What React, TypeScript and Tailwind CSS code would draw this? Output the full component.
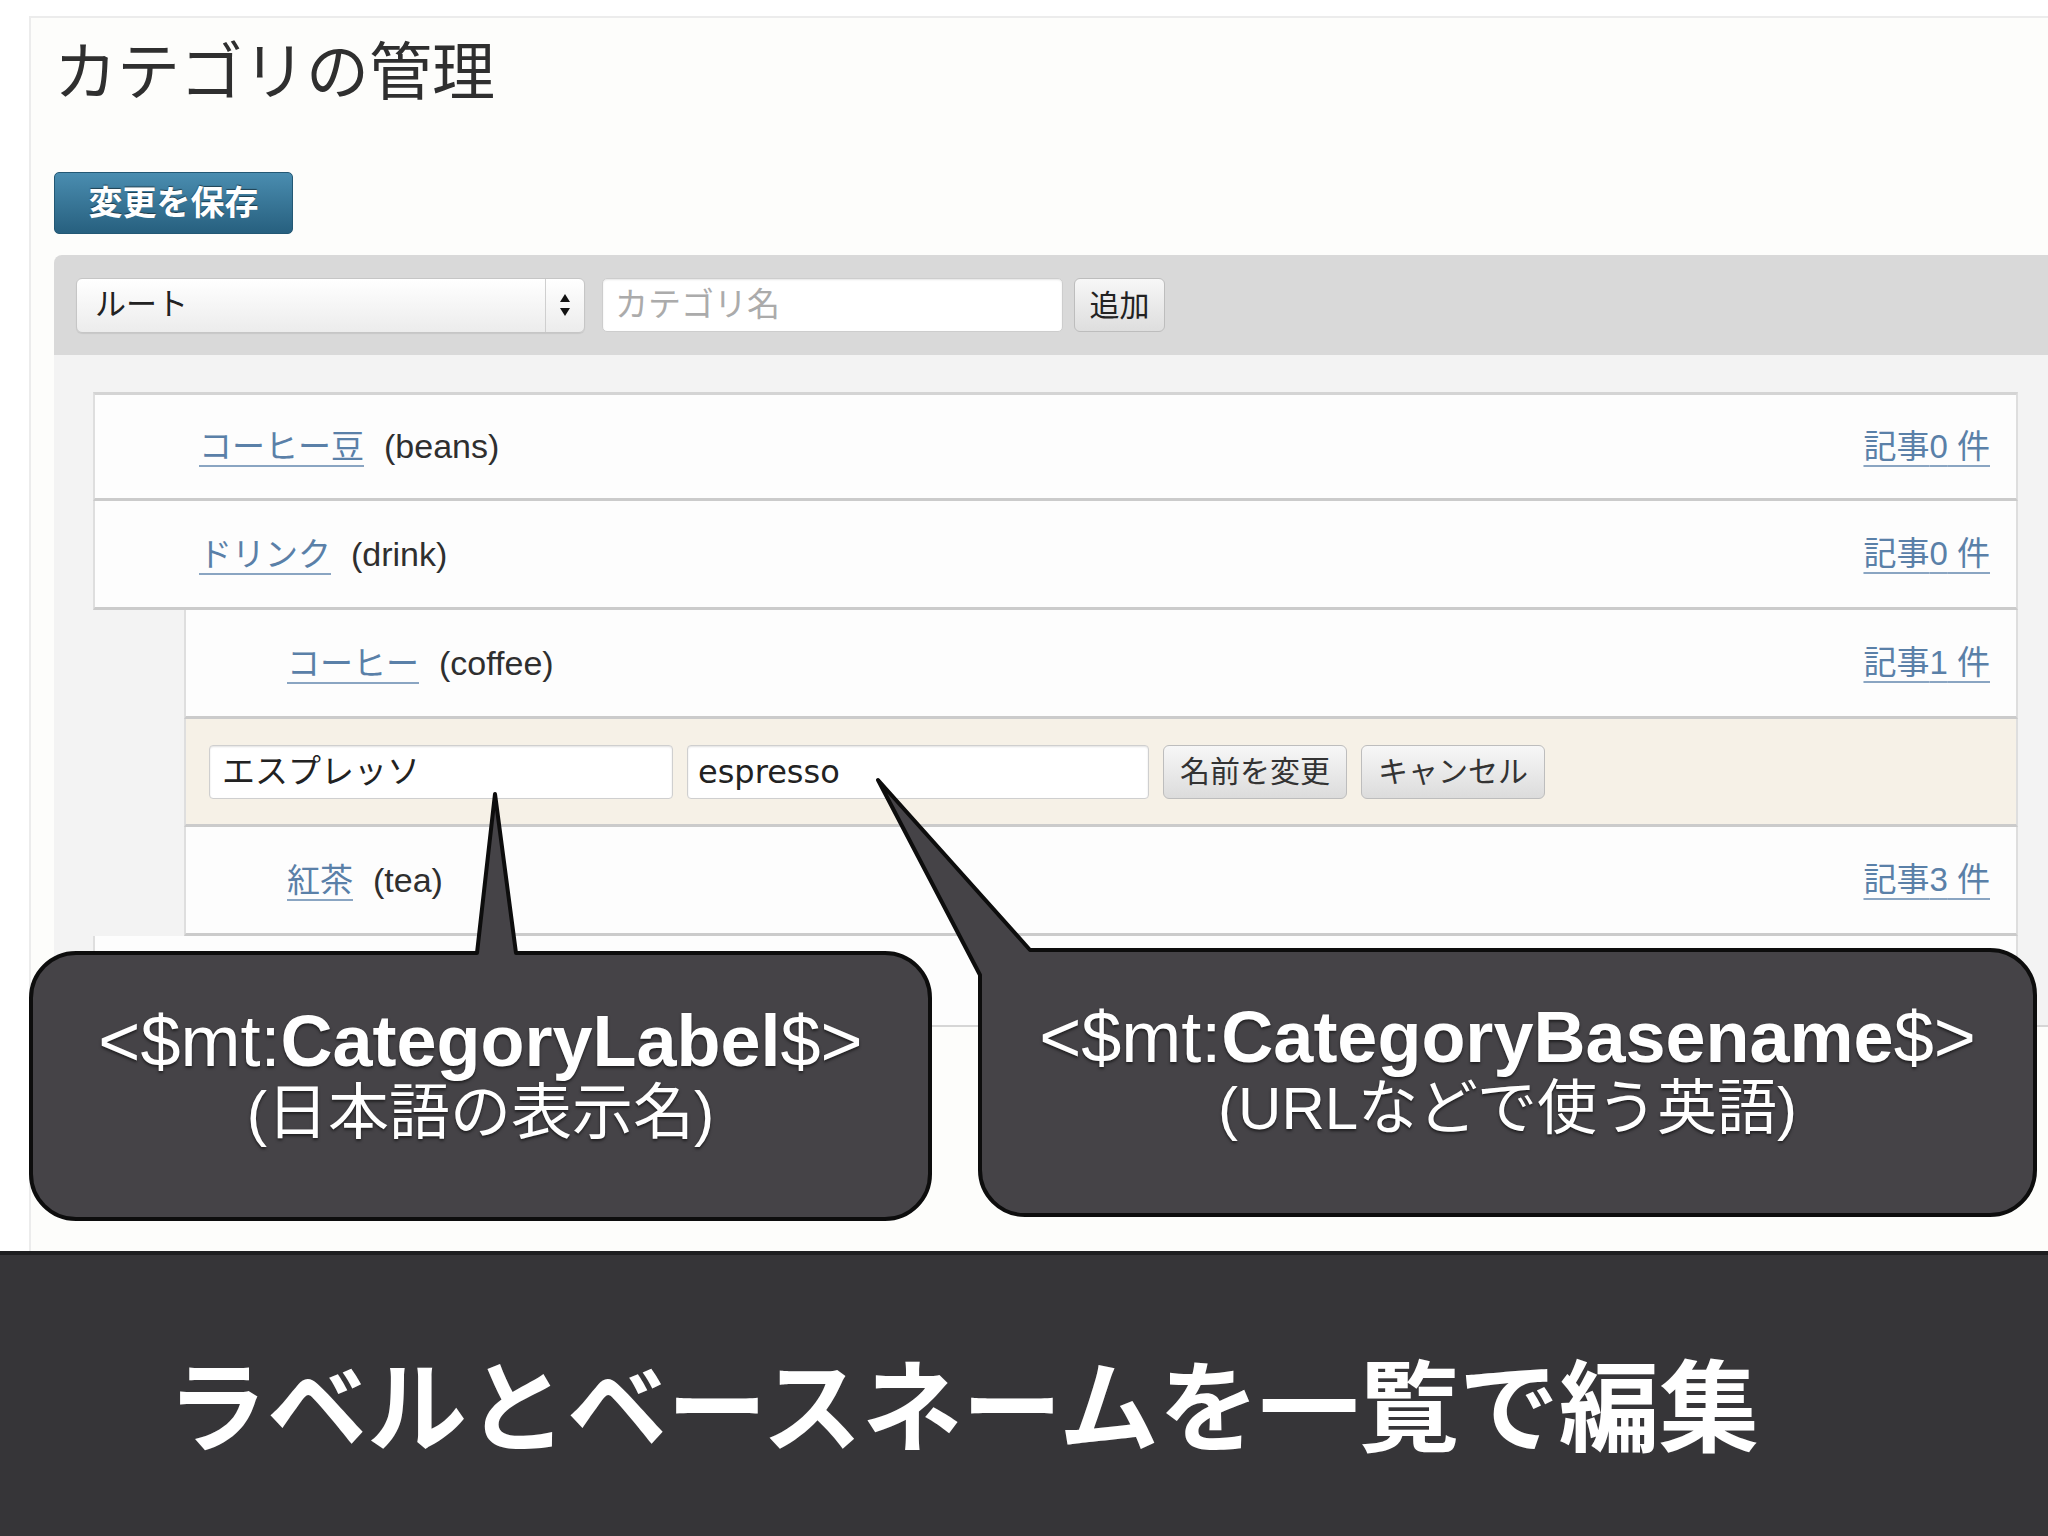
import React from 'react';

type Cat = { label: string; slug: string; count: number };

function CountLink({ count }: { count: number }) {
  return (
    <a className="text-[33px] text-[#5a80a8] underline decoration-2 decoration-[#8aa5c2] underline-offset-[7px]">
      記事{count} 件
    </a>
  );
}

function CatRow({ cat, nested, first }: { cat: Cat; nested?: boolean; first?: boolean }) {
  return (
    <div
      className={
        'flex h-[109px] items-center justify-between border-x-2 border-b-[3px] border-x-[#dedede] border-b-[#cbcbcb] bg-[#fdfdfd] pr-[26px] ' +
        (nested ? 'pl-[101px] ' : 'pl-[104px] ') +
        (first ? 'border-t-[3px] border-t-[#d4d4d4]' : '')
      }
    >
      <div className="flex items-baseline gap-[20px]">
        <a className="text-[33px] text-[#5a80a8] underline decoration-2 decoration-[#8aa5c2] underline-offset-[7px]">
          {cat.label}
        </a>
        <span className="text-[34px] text-[#2f2f2f]">({cat.slug})</span>
      </div>
      <CountLink count={cat.count} />
    </div>
  );
}

function EditRow() {
  return (
    <div className="flex h-[108px] items-center gap-[14px] border-x-2 border-b-[3px] border-x-[#dedede] border-b-[#cbcbcb] bg-[#f6f1e7] pl-[23px]">
      <div className="flex h-[54px] w-[464px] items-center rounded-[4px] border border-[#cfcfcf] bg-white pl-[12px] text-[33px] text-[#222] shadow-[inset_0_1px_2px_rgba(0,0,0,0.12)]">
        エスプレッソ
      </div>
      <div className="flex h-[54px] w-[462px] items-center rounded-[4px] border border-[#cfcfcf] bg-white pl-[10px] font-['DejaVu_Sans',sans-serif] text-[32px] text-[#222] shadow-[inset_0_1px_2px_rgba(0,0,0,0.12)]">
        espresso
      </div>
      <button className="h-[54px] w-[184px] rounded-[6px] border border-[#bdbdbd] bg-gradient-to-b from-[#f7f7f7] to-[#dcdcdc] text-[30px] text-[#333]">
        名前を変更
      </button>
      <button className="h-[54px] w-[184px] rounded-[6px] border border-[#bdbdbd] bg-gradient-to-b from-[#f7f7f7] to-[#dcdcdc] text-[30px] text-[#333]">
        キャンセル
      </button>
    </div>
  );
}

export default function App() {
  return (
    <div className="relative h-[1536px] w-[2048px] overflow-hidden bg-white font-['Liberation_Sans','Noto_Sans_CJK_JP',sans-serif] text-[#333]">
      {/* Panel */}
      <div className="ml-[29px] mt-[16px] h-[1235px] border-l-2 border-t-2 border-[#ececec] bg-[#fdfdfb] pl-[23px]">
        <h1 className="pt-[4px] text-[63px] leading-[100px] font-normal text-[#2f2f2f]">カテゴリの管理</h1>

        <button className="mt-[50px] h-[62px] w-[239px] rounded-[5px] border border-[#235874] bg-gradient-to-b from-[#4a8db0] to-[#27607f] text-[34px] font-bold text-white [text-shadow:0_-1px_1px_rgba(0,0,0,0.5)]">
          変更を保存
        </button>

        {/* Toolbar */}
        <div className="mt-[21px] flex h-[100px] items-center rounded-tl-[8px] bg-[#d9d9d9] pl-[22px]">
          <div className="flex h-[55px] w-[509px] items-stretch rounded-[6px] border border-[#c6c6c6] bg-gradient-to-b from-[#ffffff] to-[#ececec] shadow-[0_1px_1px_rgba(0,0,0,0.08)]">
            <div className="flex flex-1 items-center pl-[18px] text-[31px] text-[#222]">ルート</div>
            <div className="flex w-[39px] items-center justify-center border-l border-[#cfcfcf]">
              <svg width="12" height="26" viewBox="0 0 12 26">
                <path d="M6 2 L11 10 L1 10 Z" fill="#111" />
                <path d="M6 24 L11 16 L1 16 Z" fill="#111" />
              </svg>
            </div>
          </div>
          <div className="ml-[17px] flex h-[54px] w-[461px] items-center rounded-[5px] border border-[#cdcdcd] bg-white pl-[12px] text-[33px] text-[#ababab] shadow-[inset_0_1px_2px_rgba(0,0,0,0.1)]">
            カテゴリ名
          </div>
          <button className="ml-[11px] h-[54px] w-[91px] rounded-[6px] border border-[#bdbdbd] bg-gradient-to-b from-[#f7f7f7] to-[#dedede] text-[30px] text-[#222]">
            追加
          </button>
        </div>

        {/* Category list */}
        <div className="h-[672px] overflow-hidden border-b-2 border-[#d6d6d6] bg-[#f3f3f3] pl-[39px] pr-[30px] pt-[37px]">
          <CatRow first cat={{ label: 'コーヒー豆', slug: 'beans', count: 0 }} />
          <CatRow cat={{ label: 'ドリンク', slug: 'drink', count: 0 }} />
          <div className="ml-[91px]">
            <CatRow nested cat={{ label: 'コーヒー', slug: 'coffee', count: 1 }} />
            <EditRow />
            <CatRow nested cat={{ label: '紅茶', slug: 'tea', count: 3 }} />
          </div>
          {/* next top-level row, hidden under the callouts */}
          <div className="h-[109px] border-x-2 border-x-[#dedede] bg-[#fdfdfd]" />
        </div>
      </div>

      {/* Bottom caption band */}
      <div className="flex h-[285px] items-center border-t-4 border-[#1e1e20] bg-[#363538] pl-[167px] pt-[26px]">
        <span className="text-[100px] font-bold leading-none text-white">ラベルとベースネームを一覧で編集</span>
      </div>

      {/* Callout bubbles */}
      <svg className="pointer-events-none absolute left-0 top-0" width="2048" height="1536" viewBox="0 0 2048 1536">
        <path
          d="M477 953 L495 794 L516 953 L885 953 A45 45 0 0 1 930 998 L930 1174 A45 45 0 0 1 885 1219 L76 1219 A45 45 0 0 1 31 1174 L31 998 A45 45 0 0 1 76 953 Z"
          fill="#454347"
          stroke="#0d0d0d"
          strokeWidth="4"
          strokeLinejoin="round"
        />
        <path
          d="M878 780 L1030 950 L1990 950 A45 45 0 0 1 2035 995 L2035 1170 A45 45 0 0 1 1990 1215 L1025 1215 A45 45 0 0 1 980 1170 L980 975 Z"
          fill="#454347"
          stroke="#0d0d0d"
          strokeWidth="4"
          strokeLinejoin="round"
        />
      </svg>

      <div className="absolute left-[31px] top-[953px] flex h-[266px] w-[899px] flex-col items-center justify-center pb-[18px] text-white [text-shadow:0_2px_3px_rgba(0,0,0,0.55)]">
        <div className="text-[72px] leading-[72px]">
          &lt;$mt:<span className="font-bold">CategoryLabel</span>$&gt;
        </div>
        <div className="text-[61px] leading-[72px]">(日本語の表示名)</div>
      </div>

      <div className="absolute left-[980px] top-[950px] flex h-[265px] w-[1055px] flex-col items-center justify-center pb-[20px] text-white [text-shadow:0_2px_3px_rgba(0,0,0,0.55)]">
        <div className="text-[72px] leading-[72px]">
          &lt;$mt:<span className="font-bold">CategoryBasename</span>$&gt;
        </div>
        <div className="text-[60px] leading-[72px]">(URLなどで使う英語)</div>
      </div>
    </div>
  );
}
